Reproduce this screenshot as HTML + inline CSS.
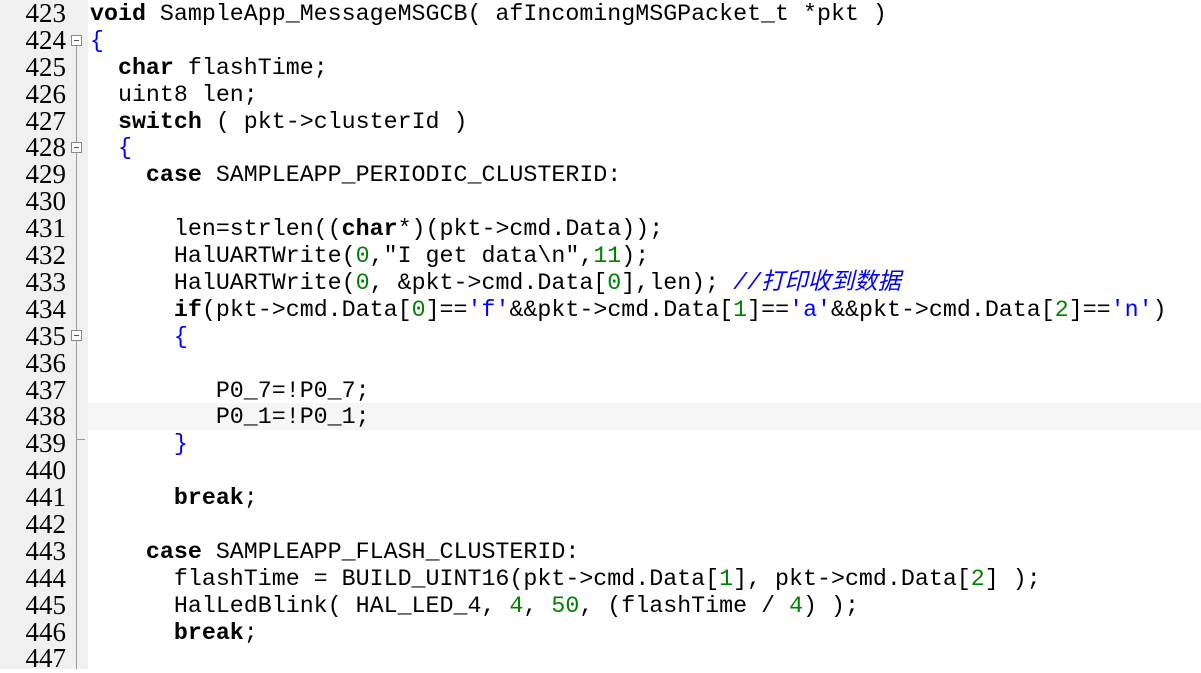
<!DOCTYPE html>
<html><head><meta charset="utf-8"><style>
html,body{margin:0;padding:0;background:#fff;width:1201px;height:669px;overflow:hidden}
#g{position:absolute;left:0;top:0;width:88px;height:669px;background:#f0f0f0}
.l{position:absolute;left:0;height:27px;line-height:27px;white-space:pre;font-family:"Liberation Mono","Noto Sans CJK SC",monospace;font-size:23.3px;color:#000;width:1201px}
.n{position:absolute;left:0;width:66px;text-align:right;font-family:"Liberation Serif",serif;font-size:27px}
.c{position:absolute;left:90px;top:1px}
b{font-weight:bold}
.g{color:#008000}.u{color:#0000ff}.cm{color:#0000ff;font-style:italic;font-family:"Liberation Mono","Noto Sans CJK SC",monospace}
.hl{position:absolute;left:88px;width:1113px;height:27px;background:#f6f6f6;top:403px}
.fb{position:absolute;left:71px;width:11px;height:11px;border:1px solid #888;background:#fff;box-sizing:border-box}
.fb:after{content:"";position:absolute;left:2px;right:2px;top:4px;height:1px;background:#555}
.vl{position:absolute;left:76px;width:1px;background:#999}
</style></head><body>
<div id="g"></div>
<div class="hl"></div>
<div class="vl" style="top:46px;height:623px"></div>
<div class="vl" style="top:439px;left:76px;width:9px;height:1px"></div>
<div class="fb" style="top:35px"></div>
<div class="fb" style="top:142px"></div>
<div class="fb" style="top:330px"></div>
<div class="l" style="top:0px"><span class="n">423</span><span class="c"><b>void</b> SampleApp_MessageMSGCB( afIncomingMSGPacket_t *pkt )</span></div>
<div class="l" style="top:27px"><span class="n">424</span><span class="c"><span class="u">{</span></span></div>
<div class="l" style="top:54px"><span class="n">425</span><span class="c">  <b>char</b> flashTime;</span></div>
<div class="l" style="top:81px"><span class="n">426</span><span class="c">  uint8 len;</span></div>
<div class="l" style="top:108px"><span class="n">427</span><span class="c">  <b>switch</b> ( pkt-&gt;clusterId )</span></div>
<div class="l" style="top:134px"><span class="n">428</span><span class="c">  <span class="u">{</span></span></div>
<div class="l" style="top:161px"><span class="n">429</span><span class="c">    <b>case</b> SAMPLEAPP_PERIODIC_CLUSTERID:</span></div>
<div class="l" style="top:188px"><span class="n">430</span><span class="c"></span></div>
<div class="l" style="top:215px"><span class="n">431</span><span class="c">      len=strlen((<b>char</b>*)(pkt-&gt;cmd.Data));</span></div>
<div class="l" style="top:242px"><span class="n">432</span><span class="c">      HalUARTWrite(<span class="g">0</span>,"I get data\n",<span class="g">11</span>);</span></div>
<div class="l" style="top:269px"><span class="n">433</span><span class="c">      HalUARTWrite(<span class="g">0</span>, &amp;pkt-&gt;cmd.Data[<span class="g">0</span>],len); <span class="cm">//打印收到数据</span></span></div>
<div class="l" style="top:296px"><span class="n">434</span><span class="c">      <b>if</b>(pkt-&gt;cmd.Data[<span class="g">0</span>]==<span class="u">'f'</span>&amp;&amp;pkt-&gt;cmd.Data[<span class="g">1</span>]==<span class="u">'a'</span>&amp;&amp;pkt-&gt;cmd.Data[<span class="g">2</span>]==<span class="u">'n'</span>)</span></div>
<div class="l" style="top:323px"><span class="n">435</span><span class="c">      <span class="u">{</span></span></div>
<div class="l" style="top:350px"><span class="n">436</span><span class="c"></span></div>
<div class="l" style="top:377px"><span class="n">437</span><span class="c">         P0_7=!P0_7;</span></div>
<div class="l" style="top:403px"><span class="n">438</span><span class="c">         P0_1=!P0_1;</span></div>
<div class="l" style="top:430px"><span class="n">439</span><span class="c">      <span class="u">}</span></span></div>
<div class="l" style="top:457px"><span class="n">440</span><span class="c"></span></div>
<div class="l" style="top:484px"><span class="n">441</span><span class="c">      <b>break</b>;</span></div>
<div class="l" style="top:511px"><span class="n">442</span><span class="c"></span></div>
<div class="l" style="top:538px"><span class="n">443</span><span class="c">    <b>case</b> SAMPLEAPP_FLASH_CLUSTERID:</span></div>
<div class="l" style="top:565px"><span class="n">444</span><span class="c">      flashTime = BUILD_UINT16(pkt-&gt;cmd.Data[<span class="g">1</span>], pkt-&gt;cmd.Data[<span class="g">2</span>] );</span></div>
<div class="l" style="top:592px"><span class="n">445</span><span class="c">      HalLedBlink( HAL_LED_4, <span class="g">4</span>, <span class="g">50</span>, (flashTime / <span class="g">4</span>) );</span></div>
<div class="l" style="top:619px"><span class="n">446</span><span class="c">      <b>break</b>;</span></div>
<div class="l" style="top:645px"><span class="n">447</span><span class="c"></span></div>
</body></html>
